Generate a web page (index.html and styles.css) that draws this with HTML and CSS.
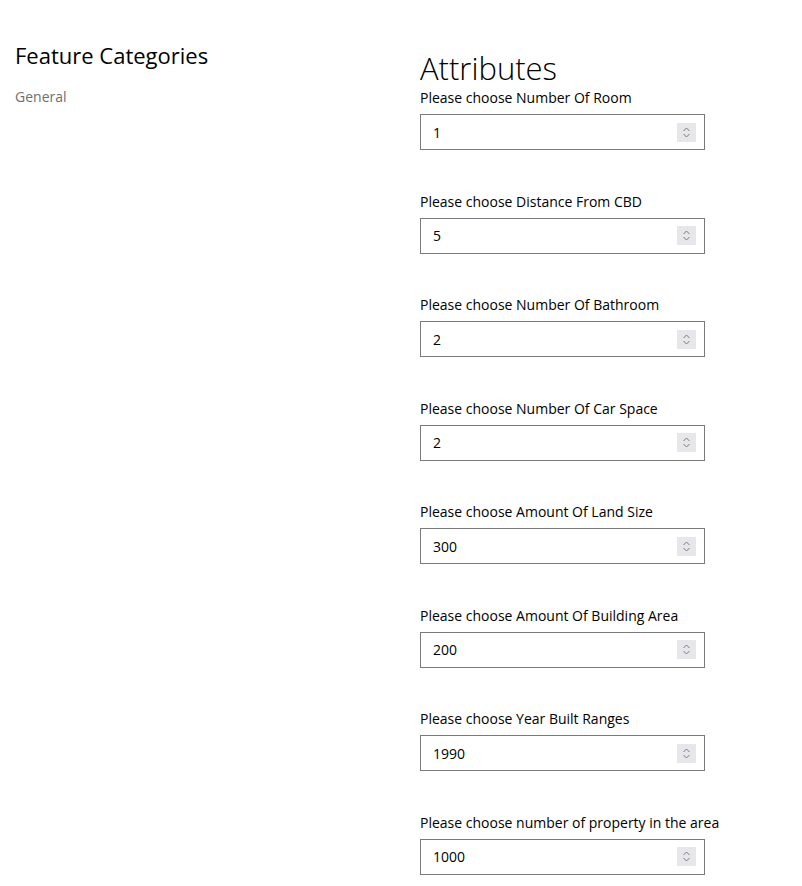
FILE: index.html
```html
<!DOCTYPE html>
<html lang="en">
<head>
<meta charset="utf-8">
<title>Attributes</title>
<link rel="stylesheet" href="styles.css">
</head>
<body>
<div class="page">
  <aside class="sidebar">
    <h2 class="sidebar-title">Feature Categories</h2>
    <div class="sidebar-item">General</div>
  </aside>
  <main class="main">
    <h1 class="main-title">Attributes</h1>
    <div class="field">
      <label class="field-label">Please choose Number Of Room</label>
      <div class="num-input"><span class="num-value">1</span><span class="spin"><svg width="9" height="13" viewBox="0 0 9 13"><path d="M1.5 5 L4.5 2 L7.5 5 M1.5 8 L4.5 11 L7.5 8" fill="none" stroke="#7c7c80" stroke-width="1"/></svg></span></div>
    </div>
    <div class="field">
      <label class="field-label">Please choose Distance From CBD</label>
      <div class="num-input"><span class="num-value">5</span><span class="spin"><svg width="9" height="13" viewBox="0 0 9 13"><path d="M1.5 5 L4.5 2 L7.5 5 M1.5 8 L4.5 11 L7.5 8" fill="none" stroke="#7c7c80" stroke-width="1"/></svg></span></div>
    </div>
    <div class="field">
      <label class="field-label">Please choose Number Of Bathroom</label>
      <div class="num-input"><span class="num-value">2</span><span class="spin"><svg width="9" height="13" viewBox="0 0 9 13"><path d="M1.5 5 L4.5 2 L7.5 5 M1.5 8 L4.5 11 L7.5 8" fill="none" stroke="#7c7c80" stroke-width="1"/></svg></span></div>
    </div>
    <div class="field">
      <label class="field-label">Please choose Number Of Car Space</label>
      <div class="num-input"><span class="num-value">2</span><span class="spin"><svg width="9" height="13" viewBox="0 0 9 13"><path d="M1.5 5 L4.5 2 L7.5 5 M1.5 8 L4.5 11 L7.5 8" fill="none" stroke="#7c7c80" stroke-width="1"/></svg></span></div>
    </div>
    <div class="field">
      <label class="field-label">Please choose Amount Of Land Size</label>
      <div class="num-input"><span class="num-value">300</span><span class="spin"><svg width="9" height="13" viewBox="0 0 9 13"><path d="M1.5 5 L4.5 2 L7.5 5 M1.5 8 L4.5 11 L7.5 8" fill="none" stroke="#7c7c80" stroke-width="1"/></svg></span></div>
    </div>
    <div class="field">
      <label class="field-label">Please choose Amount Of Building Area</label>
      <div class="num-input"><span class="num-value">200</span><span class="spin"><svg width="9" height="13" viewBox="0 0 9 13"><path d="M1.5 5 L4.5 2 L7.5 5 M1.5 8 L4.5 11 L7.5 8" fill="none" stroke="#7c7c80" stroke-width="1"/></svg></span></div>
    </div>
    <div class="field">
      <label class="field-label">Please choose Year Built Ranges</label>
      <div class="num-input"><span class="num-value">1990</span><span class="spin"><svg width="9" height="13" viewBox="0 0 9 13"><path d="M1.5 5 L4.5 2 L7.5 5 M1.5 8 L4.5 11 L7.5 8" fill="none" stroke="#7c7c80" stroke-width="1"/></svg></span></div>
    </div>
    <div class="field">
      <label class="field-label">Please choose number of property in the area</label>
      <div class="num-input"><span class="num-value">1000</span><span class="spin"><svg width="9" height="13" viewBox="0 0 9 13"><path d="M1.5 5 L4.5 2 L7.5 5 M1.5 8 L4.5 11 L7.5 8" fill="none" stroke="#7c7c80" stroke-width="1"/></svg></span></div>
    </div>
  </main>
</div>
</body>
</html>
```
FILE: styles.css
```css
html, body {
  margin: 0;
  padding: 0;
  background: #ffffff;
}
body {
  font-family: "Open Sans", "Noto Sans", "Liberation Sans", sans-serif;
  color: #000000;
  font-size: 14px;
}
.page {
  display: grid;
  grid-template-columns: 405px 1fr;
  padding-left: 15px;
}
.sidebar {
  padding-top: 39px;
}
.sidebar-title {
  margin: 0;
  font-size: 22px;
  font-weight: 400;
  line-height: 32px;
  color: #000;
}
.sidebar-item {
  margin-top: 16px;
  font-size: 14px;
  line-height: 20px;
  color: #6f6f6f;
}
.main {
  padding-top: 49px;
}
.main-title {
  margin: 0;
  font-size: 31px;
  font-weight: 300;
  line-height: 39px;
}
.field {
  display: flex;
  flex-direction: column;
  margin-bottom: 41.5px;
}
.field-label {
  font-size: 14px;
  line-height: 20px;
  margin-bottom: 6px;
}
.num-input {
  box-sizing: border-box;
  width: 285px;
  height: 36px;
  border: 1px solid #7a7a7a;
  display: flex;
  align-items: center;
  justify-content: space-between;
  padding: 0 8px 0 12px;
}
.num-value {
  font-size: 14px;
}
.spin {
  width: 19px;
  height: 19px;
  background: #e7e7eb;
  display: flex;
  align-items: center;
  justify-content: center;
}
.spin svg {
  display: block;
}
```
